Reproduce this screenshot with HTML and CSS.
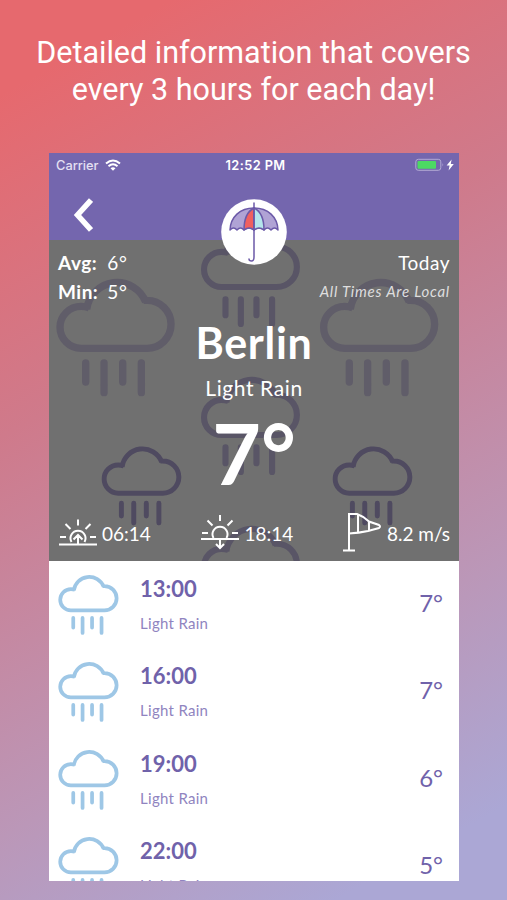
FILE: index.html
```
<!DOCTYPE html>
<html lang="en">
<head>
    <meta charset="UTF-8">
    <meta name="viewport" content="width=device-width, initial-scale=1.0">
    <title>Weather - Berlin</title>
    <link rel="stylesheet" href="styles.css">
</head>
<body>
    <!-- Shared rain cloud shape -->
    <svg class="defs" width="0" height="0">
        <symbol id="rain" viewBox="0 0 360 360">
            <g fill="none" stroke="currentColor" stroke-width="22">
                <path d="M100 93Q88 89 76 89A63 63 0 0 0 76 215H274A72 72 0 0 0 274 71H264M270 76A92 92 0 0 0 93 98" />
                <path stroke-linecap="round" d="M90 259v57M145 259v89M201 259v57M257 259v89" />
            </g>
        </symbol>
    </svg>

    <h1 class="headline">Detailed information that covers<br>every 3 hours for each day!</h1>

    <main class="phone">
        <header class="topbar">
            <div class="status">
                <div class="carrier">
                    <span>Carrier</span>
                    <svg width="16" height="12" viewBox="0 0 16 12" fill="none" stroke="#fff" stroke-width="2">
                        <path d="M1 4.600Q8-1.600 15 4.600M3.500 7.200Q8 3.200 12.500 7.200" />
                        <path d="M5.500 9.200Q8 7.200 10.500 9.200L8 11.700z" fill="#fff" stroke="none" />
                    </svg>
                </div>
                <span class="clock">12:52 PM</span>
                <svg class="battery" width="40" height="14" viewBox="0 0 40 14">
                    <rect x=".8" y="1.300" width="25" height="11" rx="2.500" fill="none" stroke="#b3abd4" />
                    <rect x="2.500" y="3" width="18.500" height="7.700" rx="1" fill="#4cd964" />
                    <path d="M27.500 5v3.600q1.500-1.800 0-3.600" fill="#b3abd4" />
                    <path d="M36.600 1.500l-5 6h3l-1 5 5.200-6.600h-3z" fill="#fff" />
                </svg>
            </div>
            <svg class="back" width="20" height="34" viewBox="0 0 20 34" fill="none" stroke="#fff" stroke-width="5.500">
                <path d="M18 2L4.500 17l13.500 15" />
            </svg>
        </header>

        <svg class="logo" width="66" height="66" viewBox="0 0 66 66">
            <circle cx="33" cy="33" r="32.800" fill="#fff" />
            <g stroke="#6c5aa8" stroke-width="1.500" stroke-linejoin="round">
                <path fill="#b0a3d5" d="M33 9C19 9 9.500 18 9 31q3.500-4 7 0 3.500-4 7 0 5-4 10 0 5-4 10 0 3.500-4 7 0 3.500-4 7 0C56.500 18 47 9 33 9z" />
                <path fill="#f0605f" d="M33 9q-10 5-10 22 5-4 10 0z" />
                <path fill="#b5e5ec" d="M33 9q10 5 10 22-5-4-10 0z" />
                <path fill="none" stroke-linecap="round" d="M33 4v54q0 4-2.500 4t-2.500-2" />
            </g>
        </svg>

        <section class="current">
            <svg class="pattern" width="410" height="321" viewBox="49 240 410 321">
                <g color="#605d69">
                    <use href="#rain" x="55.700" y="276.700" width="120" height="120" />
                    <use href="#rain" x="319.300" y="276.700" width="120" height="120" />
                </g>
                <g color="#595566">
                    <use href="#rain" x="200.400" y="227" width="100.400" height="100.400" />
                    <use href="#rain" x="200.400" y="375" width="100.400" height="100.400" />
                    <use href="#rain" x="200.400" y="524" width="100.400" height="100.400" />
                </g>
                <g color="#4f4a60">
                    <use href="#rain" x="101.200" y="445" width="80.800" height="80.800" />
                    <use href="#rain" x="332.200" y="445" width="80.800" height="80.800" />
                </g>
            </svg>

            <div class="summary">
                <div class="averages">
                    <div><b>Avg:</b> 6°</div>
                    <div><b>Min:</b> 5°</div>
                </div>
                <div class="day">
                    <div>Today</div>
                    <div class="note">All Times Are Local</div>
                </div>
            </div>

            <h2 class="city">Berlin</h2>
            <p class="condition">Light Rain</p>
            <p class="temperature">7°</p>

            <div class="details">
                <div class="detail">
                    <svg width="40" height="42" viewBox="0 0 40 42" fill="none" stroke="#fff" stroke-width="2">
                        <path d="M1 32.500h38M2 25h6M32 25h6M7.500 12l5 5M32.500 12l-5 5M20 7.500v6M13.500 30a7.500 7.500 0 1 1 13 0M20 32V23M15.500 27.500L20 23l4.500 4.500" />
                    </svg>
                    <span>06:14</span>
                </div>
                <div class="detail">
                    <svg width="40" height="42" viewBox="0 0 40 42" fill="none" stroke="#fff" stroke-width="2">
                        <path d="M1 27h38M2 21h6M32 21h6M7.500 8.500l5 5M32.500 8.500l-5 5M20 3v6M13.500 26a7.500 7.500 0 1 1 13 0M20 27v9M16 32l4 4 4-4" />
                    </svg>
                    <span>18:14</span>
                </div>
                <div class="detail">
                    <svg width="40" height="42" viewBox="0 0 40 42" fill="none" stroke="#fff" stroke-width="2">
                        <path d="M0 38.500h12M6 38V2h8q6 2 12 7.500l10 3.500q2 1.500 0 3l-11 3q-9 2-19 2.500M15 2v19M26 10v9" />
                    </svg>
                    <span>8.2 m/s</span>
                </div>
            </div>
        </section>

        <section class="hours">
            <article class="hour">
                <svg class="cloud"><use href="#rain" /></svg>
                <div class="info">
                    <h3>13:00</h3>
                    <p>Light Rain</p>
                </div>
                <span class="degrees">7°</span>
            </article>
            <article class="hour">
                <svg class="cloud"><use href="#rain" /></svg>
                <div class="info">
                    <h3>16:00</h3>
                    <p>Light Rain</p>
                </div>
                <span class="degrees">7°</span>
            </article>
            <article class="hour">
                <svg class="cloud"><use href="#rain" /></svg>
                <div class="info">
                    <h3>19:00</h3>
                    <p>Light Rain</p>
                </div>
                <span class="degrees">6°</span>
            </article>
            <article class="hour">
                <svg class="cloud"><use href="#rain" /></svg>
                <div class="info">
                    <h3>22:00</h3>
                    <p>Light Rain</p>
                </div>
                <span class="degrees">5°</span>
            </article>
        </section>
    </main>
</body>
</html>
```
FILE: styles.css
```
* {
    margin: 0;
    padding: 0;
    box-sizing: border-box;
}

body {
    height: 900px;
    overflow: hidden;
    background: linear-gradient(151deg, #e6696e 8%, #cf7a8b 37%, #bb97b8 71%, #aba7d5 92%);
    font-family: Lato, sans-serif;
    color: #fff;
}

svg {
    display: block;
    flex-shrink: 0;
}

.defs {
    position: absolute;
}

.headline {
    height: 153px;
    padding-top: 34px;
    font: 400 30.5px/37px Roboto, sans-serif;
    text-align: center;
    white-space: nowrap;
}

.phone {
    position: relative;
    width: 410px;
    height: 728px;
    margin-left: 49px;
    overflow: hidden;
    background: #fff;
}

/* Top bar */
.topbar {
    height: 87px;
    background: #7466ae;
}

.status {
    display: grid;
    grid-template-columns: 1fr auto 1fr;
    align-items: center;
    height: 24px;
    padding: 0 4px 0 7px;
    font: 500 12.8px Inter, sans-serif;
}

.carrier {
    display: flex;
    align-items: center;
    gap: 6px;
    color: #e4e0f2;
}

.clock {
    font-weight: 600;
    letter-spacing: 0.4px;
}

.battery {
    justify-self: end;
}

.back {
    margin: 21px 0 0 24px;
}

.logo {
    position: absolute;
    z-index: 2;
    top: 46px;
    left: 172px;
}

/* Current weather */
.current {
    position: relative;
    height: 321px;
    overflow: hidden;
    background: #707070;
    text-align: center;
}

.current > * {
    position: relative;
}

.current .pattern {
    position: absolute;
    top: 0;
    left: 0;
}

.summary {
    display: flex;
    justify-content: space-between;
    height: 80px;
    padding: 8px 9px 0;
    font-size: 19px;
    line-height: 29px;
    letter-spacing: 0.5px;
    text-align: left;
}

.averages b {
    display: inline-block;
    width: 44px;
}

.day {
    text-align: right;
}

.note {
    font-size: 15px;
    font-style: italic;
    letter-spacing: 0.75px;
    color: #dedede;
}

.city {
    font-size: 43px;
    line-height: 46px;
    letter-spacing: 0.7px;
}

.condition {
    margin-top: 8px;
    font-size: 21px;
    line-height: 28px;
    letter-spacing: 0.6px;
}

.temperature {
    height: 90px;
    font-size: 84px;
    font-weight: 700;
    line-height: 102px;
}

.details {
    display: flex;
    justify-content: space-between;
    padding: 20px 9px 0;
    font-size: 19px;
}

.detail {
    display: flex;
    align-items: center;
    gap: 4px;
}

/* Hourly list */
.hour {
    display: flex;
    height: 87.4px;
    padding: 13px 16px 0 9px;
    color: #7062aa;
}

.cloud {
    width: 61px;
    height: 61px;
    color: #9ec7e6;
}

.info {
    flex: 1;
    padding-left: 21px;
}

.info h3 {
    padding-top: 1px;
    font-size: 22px;
    line-height: 28px;
}

.info p {
    margin-top: 10px;
    font-size: 15px;
    line-height: 20px;
    letter-spacing: 0.3px;
    color: #9084c0;
}

.degrees {
    padding-top: 13px;
    font-size: 24px;
    line-height: 32px;
}
```
